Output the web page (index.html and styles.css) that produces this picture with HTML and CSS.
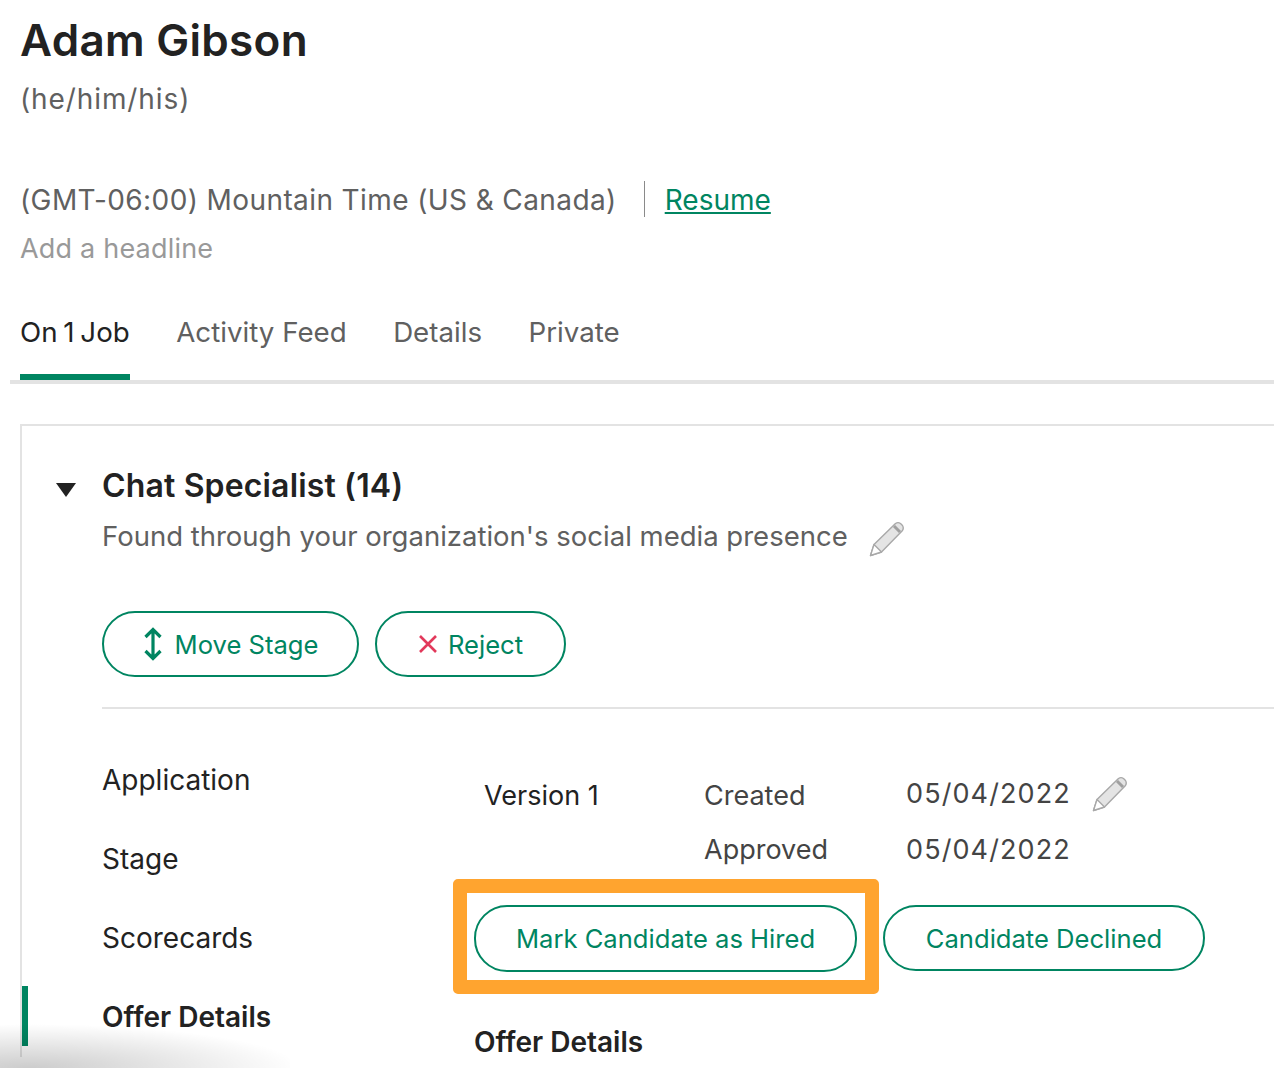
FILE: index.html
```html
<!DOCTYPE html>
<html lang="en">
<head>
  <meta charset="UTF-8">
  <meta name="viewport" content="width=device-width, initial-scale=1.0">
  <title>Adam Gibson</title>
  <link rel="stylesheet" href="styles.css">
</head>
<body>
  <div class="profile">
    <h1>Adam Gibson</h1>
    <div class="pronouns">(he/him/his)</div>
    <div class="meta">
      <span class="zone">(GMT-06:00) Mountain Time (US &amp; Canada)</span>
      <a class="resume" href="#">Resume</a>
    </div>
    <div class="headline">Add a headline</div>
  </div>

  <div class="tabs">
    <div class="tab active">On 1 Job</div>
    <div class="tab">Activity Feed</div>
    <div class="tab">Details</div>
    <div class="tab">Private</div>
  </div>

  <div class="card">
    <div class="job_head">
      <div class="arrow"></div>
      <div class="job_info">
        <div class="job_title">Chat Specialist (14)</div>
        <div class="source">
          <span>Found through your organization's social media presence</span>
          <svg class="pencil pencil_low" viewBox="0 0 36 36">
            <path d="M1.5 34.5 L5 23.5 L26.5 2.5 Q29 0.8 31.5 2.5 L33.5 4.5 Q35 7 33.5 9.5 L12.5 31 Z" fill="#e4e4e4" stroke="#a8a8a8" stroke-width="1.4" stroke-linejoin="round"/>
            <path d="M5 23.5 L1.5 34.5 L12.5 31 Z" fill="#fff" stroke="#a8a8a8" stroke-width="1.4" stroke-linejoin="round"/>
            <path d="M25 5 L31 11" fill="none" stroke="#a0a0a0" stroke-width="3"/>
          </svg>
        </div>
        <div class="actions">
          <button class="btn btn_move">
            <svg class="icon_move" viewBox="0 0 20 34">
              <path d="M10 3 V31 M2.5 10 L10 2.5 L17.5 10 M2.5 24 L10 31.5 L17.5 24" fill="none" stroke="#008561" stroke-width="3.2"/>
            </svg>
            Move Stage
          </button>
          <button class="btn btn_reject">
            <svg class="icon_x" viewBox="0 0 20 20">
              <path d="M2 2 L18 18 M18 2 L2 18" fill="none" stroke="#e2395b" stroke-width="2.6"/>
            </svg>
            Reject
          </button>
        </div>
        <div class="divider"></div>
      </div>
    </div>

    <div class="job_body">
      <div class="side_nav">
        <div class="side_item">Application</div>
        <div class="side_item">Stage</div>
        <div class="side_item">Scorecards</div>
        <div class="side_item current">Offer Details</div>
      </div>
      <div class="offer">
        <div class="version_grid">
          <div class="version">Version 1</div>
          <div class="label">Created</div>
          <div class="date first">
            05/04/2022
            <svg class="pencil" viewBox="0 0 36 36">
              <path d="M1.5 34.5 L5 23.5 L26.5 2.5 Q29 0.8 31.5 2.5 L33.5 4.5 Q35 7 33.5 9.5 L12.5 31 Z" fill="#e4e4e4" stroke="#a8a8a8" stroke-width="1.4" stroke-linejoin="round"/>
              <path d="M5 23.5 L1.5 34.5 L12.5 31 Z" fill="#fff" stroke="#a8a8a8" stroke-width="1.4" stroke-linejoin="round"/>
              <path d="M25 5 L31 11" fill="none" stroke="#a0a0a0" stroke-width="3"/>
            </svg>
          </div>
          <div></div>
          <div class="label">Approved</div>
          <div class="date">05/04/2022</div>
        </div>
        <div class="offer_actions">
          <div class="highlight"></div>
          <button class="btn btn_hired">Mark Candidate as Hired</button>
          <button class="btn btn_declined">Candidate Declined</button>
        </div>
        <div class="offer_title">Offer Details</div>
      </div>
    </div>
  </div>

  <div class="corner_shadow"></div>
</body>
</html>
```

FILE: styles.css
```css
html, body {
  margin: 0;
  height: 100%;
}
body {
  position: relative;
  height: 1068px;
  overflow: hidden;
  background: white;
  color: #222;
  font-family: Inter, "Liberation Sans", sans-serif;
  font-size: 27px;
  line-height: 30px;
}
button {
  font-family: inherit;
}
h1 {
  margin: 15px 0 0;
  font-size: 44px;
  line-height: 50px;
  font-weight: 600;
  letter-spacing: 0.3px;
}
.profile {
  padding-left: 20px;
}
.pronouns {
  margin-top: 19px;
  font-size: 28px;
  letter-spacing: 0.9px;
  color: #606060;
}
.meta {
  display: flex;
  align-items: center;
  height: 36px;
  margin-top: 67px;
  color: #606060;
  font-size: 28px;
}
.zone {
  padding-right: 27px;
  border-right: 1px solid #8a8a8a;
  height: 36px;
  line-height: 38px;
  letter-spacing: 0.4px;
}
.resume {
  margin: 2px 0 0 20px;
  color: #008561;
}
.headline {
  margin-top: 17px;
  letter-spacing: 0.2px;
  color: #999;
}
.tabs {
  display: flex;
  gap: 46.5px;
  margin: 52px 0 0 10px;
  padding-left: 10px;
  border-bottom: 4px solid #e3e3e3;
  font-size: 27.7px;
}
.tab {
  padding: 1px 0 27px;
  border-bottom: 6px solid transparent;
  color: #606060;
}
.tab.active {
  color: #222;
  word-spacing: -2px;
  border-bottom-color: #008561;
}
.card {
  margin: 40px 0 0 20px;
  border-top: 2px solid #e3e3e3;
  border-left: 2px solid #e3e3e3;
}
.job_head {
  display: flex;
  gap: 26px;
  padding: 42px 0 0 34px;
}
.arrow {
  width: 0;
  height: 0;
  margin-top: 15px;
  border-left: 10px solid transparent;
  border-right: 10px solid transparent;
  border-top: 14px solid #222;
}
.job_info {
  flex: 1;
}
.job_title {
  font-size: 32px;
  line-height: 36px;
  letter-spacing: 0.15px;
  font-weight: 600;
}
.source {
  display: flex;
  align-items: center;
  gap: 21px;
  height: 30px;
  margin-top: 17px;
  font-size: 27.5px;
  color: #606060;
}
.pencil {
  width: 36px;
  height: 36px;
  flex: none;
}
.pencil_low {
  margin-top: 6px;
}
.actions {
  display: flex;
  gap: 16px;
  margin-top: 60px;
}
.btn {
  display: flex;
  align-items: center;
  justify-content: center;
  height: 66px;
  padding: 0;
  background: white;
  border: 2px solid #008561;
  border-radius: 33px;
  color: #008561;
  font-size: 25.6px;
}
.btn_move {
  width: 257px;
  gap: 12px;
}
.btn_reject {
  width: 191px;
  gap: 10px;
}
.icon_move {
  width: 20px;
  height: 34px;
}
.icon_x {
  width: 20px;
  height: 20px;
}
.divider {
  height: 2px;
  margin-top: 30px;
  background: #e3e3e3;
}
.job_body {
  display: flex;
  margin-top: 40px;
}
.side_nav {
  display: flex;
  flex-direction: column;
  gap: 19px;
  width: 452px;
  flex: none;
  font-size: 28px;
}
.side_item {
  height: 60px;
  padding-left: 74px;
  margin-left: 6px;
  line-height: 62px;
}
.side_item.current {
  margin-left: 0;
  padding-left: 80px;
  background: linear-gradient(to right, #008561 6px, transparent 6px);
  font-weight: 600;
}
.offer {
  padding-top: 32px;
}
.version_grid {
  display: grid;
  grid-template-columns: 220px 202px auto;
  row-gap: 24px;
  padding-left: 10px;
}
.label {
  color: #444;
}
.date {
  display: flex;
  align-items: center;
  gap: 21px;
  height: 30px;
  letter-spacing: 1.1px;
  color: #444;
}
.date.first {
  margin-top: -2px;
}
.offer_actions {
  position: relative;
  display: flex;
  gap: 26px;
  margin-top: 40px;
}
.highlight {
  position: absolute;
  left: -21px;
  top: -26px;
  width: 398px;
  height: 87px;
  border: 14px solid #ffa42f;
  border-radius: 5px;
}
.btn_hired {
  position: relative;
  width: 383px;
  height: 67px;
}
.btn_declined {
  width: 322px;
}
.offer_title {
  margin-top: 55px;
  font-size: 28px;
  font-weight: 600;
}
.corner_shadow {
  position: absolute;
  left: 0;
  bottom: 0;
  width: 290px;
  height: 44px;
  background: radial-gradient(ellipse 270px 44px at 30px 100%, rgba(0, 0, 0, 0.2), transparent);
}
```
